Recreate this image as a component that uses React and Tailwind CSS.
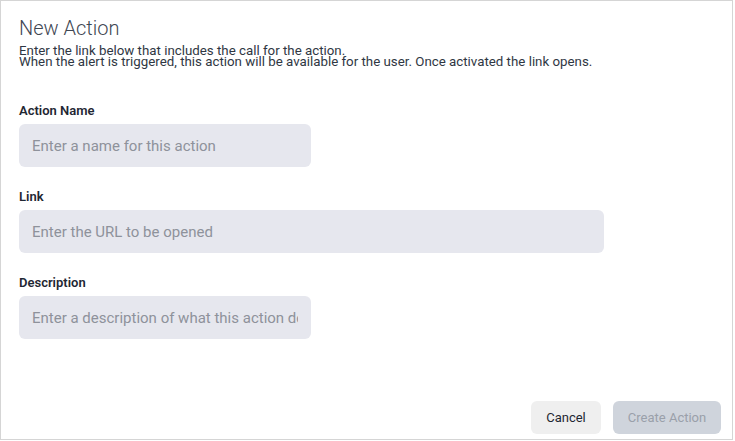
import React from "react";

function Field({ label, placeholder, wide }) {
  return (
    <div className="flex flex-col">
      <label className="text-[13px] leading-4 font-semibold text-[#1f2733]">{label}</label>
      <input
        type="text"
        placeholder={placeholder}
        className={`mt-[5px] h-[43px] rounded-[6px] bg-[#e6e7ee] px-[13px] text-[15px] text-[#1f2733] outline-none placeholder:text-[#8e929b] ${wide ? "w-[585px]" : "w-[292px]"}`}
      />
    </div>
  );
}

export default function App() {
  return (
    <div
      className="w-[733px] h-[440px] border border-[#d5d5d5] bg-white flex flex-col"
      style={{ fontFamily: "Roboto, 'Noto Sans', sans-serif" }}
    >
      <div className="pl-[18px] pt-[13px]">
        <h1 className="text-xl leading-7 font-light text-[#3f4753]">New Action</h1>
        <p className="mt-[3px] text-[13.3px] leading-[11px] text-[#2f3743]">
          Enter the link below that includes the call for the action.
          <br />
          When the alert is triggered, this action will be available for the user. Once activated the link opens.
        </p>
        <div className="mt-[36px] flex flex-col gap-[22px]">
          <Field label="Action Name" placeholder="Enter a name for this action" />
          <Field label="Link" placeholder="Enter the URL to be opened" wide />
          <Field label="Description" placeholder="Enter a description of what this action does" />
        </div>
      </div>
      <div className="mt-auto flex justify-end gap-3 pr-[11px] pb-[5px]">
        <button className="h-[33px] w-[70px] rounded-[6px] bg-[#efefef] text-[13px] text-[#1f2733]">Cancel</button>
        <button className="h-[33px] w-[108px] rounded-[6px] bg-[#cfd4dc] text-[13px] text-[#9aa0aa]" disabled>
          Create Action
        </button>
      </div>
    </div>
  );
}
